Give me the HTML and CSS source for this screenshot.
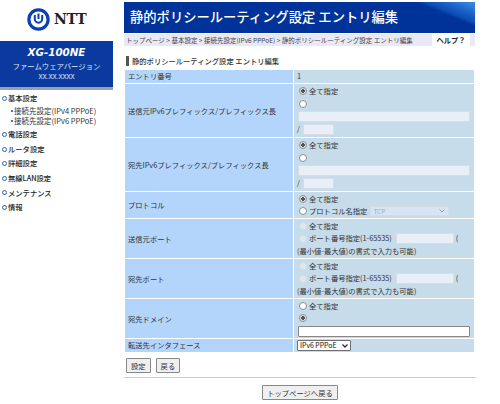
FILE: index.html
```html
<!DOCTYPE html>
<html lang="ja">
<head>
<meta charset="utf-8">
<title>静的ポリシールーティング設定 エントリ編集</title>
<link rel="stylesheet" href="styles.css">
</head>
<body>
<div class="page">
  <aside class="side">
    <div class="logo">
      <svg class="mark" width="23" height="23" viewBox="0 0 23 23"><circle cx="11.5" cy="11.5" r="9.6" fill="none" stroke="#0a3fb5" stroke-width="3.2"/><path d="M7.8 7 V11 A3.7 3.7 0 0 0 15.2 11 V7" fill="none" stroke="#0a3fb5" stroke-width="2"/><path d="M11.5 5.5 V11" stroke="#0a3fb5" stroke-width="2"/></svg>
      <span class="ntt">NTT</span>
    </div>
    <div class="model">
      <div class="model-name">XG-100NE</div>
      <div class="fw">ファームウェアバージョン</div>
      <div class="ver">XX.XX.XXXX</div>
    </div>
    <nav class="menu">
      <div class="mi"><i class="dot"></i>基本設定</div>
      <div class="sub">接続先設定(IPv4 PPPoE)</div>
      <div class="sub">接続先設定(IPv6 PPPoE)</div>
      <div class="mi"><i class="dot"></i>電話設定</div>
      <div class="mi"><i class="dot"></i>ルータ設定</div>
      <div class="mi"><i class="dot"></i>詳細設定</div>
      <div class="mi"><i class="dot"></i>無線LAN設定</div>
      <div class="mi"><i class="dot"></i>メンテナンス</div>
      <div class="mi"><i class="dot"></i>情報</div>
    </nav>
  </aside>
  <main class="main">
    <h1 class="title">静的ポリシールーティング設定 エントリ編集</h1>
    <div class="crumbs">
      <span class="crumb-text">トップページ &gt; 基本設定 &gt; 接続先設定(IPv6 PPPoE) &gt; 静的ポリシールーティング設定 エントリ編集</span>
      <span class="help">ヘルプ？</span>
    </div>
    <h2 class="section">静的ポリシールーティング設定 エントリ編集</h2>
    <table class="form">
      <tr class="r1"><th>エントリ番号</th><td><span class="val">1</span></td></tr>
      <tr class="r2"><th>送信元IPv6プレフィックス/プレフィックス長</th><td>
        <label class="line"><input type="radio" class="rd" name="a" checked>全て指定</label>
        <label class="line"><input type="radio" class="rd" name="a"></label>
        <input class="tx full off" disabled>
        <div class="line2">/<input class="tx short off" disabled></div>
      </td></tr>
      <tr class="r2"><th>宛先IPv6プレフィックス/プレフィックス長</th><td>
        <label class="line"><input type="radio" class="rd" name="b" checked>全て指定</label>
        <label class="line"><input type="radio" class="rd" name="b"></label>
        <input class="tx full off" disabled>
        <div class="line2">/<input class="tx short off" disabled></div>
      </td></tr>
      <tr class="r4"><th>プロトコル</th><td>
        <label class="line"><input type="radio" class="rd" name="c" checked>全て指定</label>
        <label class="line"><input type="radio" class="rd" name="c">プロトコル名指定<select class="sel off" disabled><option>TCP</option></select></label>
      </td></tr>
      <tr class="r5"><th>送信元ポート</th><td>
        <label class="line"><input type="radio" class="rd" name="d" disabled>全て指定</label>
        <label class="line"><input type="radio" class="rd" name="d" disabled>ポート番号指定(1-65535)<input class="tx port off" disabled>(</label>
        <div class="line note">(最小値-最大値)の書式で入力も可能)</div>
      </td></tr>
      <tr class="r5"><th>宛先ポート</th><td>
        <label class="line"><input type="radio" class="rd" name="e" disabled>全て指定</label>
        <label class="line"><input type="radio" class="rd" name="e" disabled>ポート番号指定(1-65535)<input class="tx port off" disabled>(</label>
        <div class="line note">(最小値-最大値)の書式で入力も可能)</div>
      </td></tr>
      <tr class="r5"><th>宛先ドメイン</th><td>
        <label class="line"><input type="radio" class="rd" name="f">全て指定</label>
        <label class="line"><input type="radio" class="rd" name="f" checked></label>
        <input class="tx full on">
      </td></tr>
      <tr class="r1"><th>転送先インタフェース</th><td><select class="sel2"><option>IPv6 PPPoE</option></select></td></tr>
    </table>
    <div class="actions"><button class="btn">設定</button><button class="btn">戻る</button></div>
    <hr class="rule">
    <div class="top"><button class="btn">トップページへ戻る</button></div>
  </main>
</div>
</body>
</html>
```
FILE: styles.css
```css
html,body{margin:0;padding:0;background:#fff}
body{font-family:"Noto Sans CJK JP","Noto Sans",sans-serif;font-size:7.3px;color:#333;width:500px;height:404px;overflow:hidden}
.page{display:flex;align-items:flex-start}
.side{width:113px;flex:none;margin-right:11px}
.logo{height:41px;display:flex;align-items:center;gap:4px;padding:0 0 3px 27px;box-sizing:border-box;background:#fff}
.ntt{font-family:"DejaVu Serif",serif;font-weight:700;font-size:14px;color:#222;letter-spacing:-.2px}
.model{height:46px;background:#0b3a9f;border-bottom:3px solid #9a9fae;text-align:center;color:#dfe6f6}
.model-name{font-family:"DejaVu Sans",sans-serif;font-style:italic;font-weight:700;font-size:10.3px;color:#fff;padding-top:5px;line-height:13px}
.fw{font-size:7.4px;line-height:11px;margin-top:1px}
.ver{font-size:7.2px;line-height:10px;margin-top:1px;letter-spacing:-.1px;transform:scaleY(.8)}
.menu{padding:1px 0 0 2px}
.mi{font-size:7.3px;line-height:14.6px;color:#222;font-weight:500;display:flex;align-items:center}
.dot{width:3px;height:3px;border:1.5px solid #1a66c8;border-radius:50%;margin-right:1px;flex:none}
.sub{font-size:7.5px;line-height:10.8px;padding-left:12px;color:#333;position:relative}
.sub::before{content:"";position:absolute;left:9px;top:4px;width:2px;height:2px;background:#3a78c8}
.main{width:352px;flex:none}
.title{margin:2px 0 0;height:31px;box-sizing:border-box;width:351px;padding-left:6px;font-size:13.3px;line-height:30px;font-weight:500;color:#fff;background:linear-gradient(22deg,#003399 0,#003399 86%,#0c4db2 88%,#1a5fc4 92%,#2a78d8 96%,#3a8ce2 100%)}
.crumbs{margin-top:1px;width:351px;height:12px;background:#e9e9f5;display:flex;justify-content:space-between;align-items:center;box-sizing:border-box;padding-left:2px}
.crumb-text{font-size:6.5px;white-space:nowrap;color:#444;line-height:12px}
.help{background:#fff;width:38px;height:12px;line-height:13px;font-size:7.3px;font-weight:700;color:#222;text-align:center;margin-right:5px}
.section{margin:10px 0 0 2px;height:10px;font-size:7.3px;line-height:10px;font-weight:500;color:#333;border-left:3px solid #555;padding-left:3px}
.form{margin:3px 0 0 0;border-collapse:collapse;table-layout:fixed;width:351px}
.form th,.form td{padding:0;border:1px solid #fff}
.form th{width:169px;background:#b3d5fb;text-align:left;font-weight:400;padding-left:3px;box-sizing:border-box;color:#333}
.form td{background:#c6dcea;padding-left:2px;color:#333;vertical-align:middle}
.r1 th,.r1 td{height:13px;line-height:13px}
.r2 th,.r2 td{height:53px}
.r4 th,.r4 td{height:26px}
.r5 th,.r5 td{height:39px}
.val{padding-left:1px}
.line{display:flex;align-items:center;height:12.5px;line-height:12.5px;white-space:nowrap}
.note{padding-left:1px}
.line2{height:13px;line-height:13px;display:flex;align-items:center;gap:3px;padding-left:1px}
.rd{appearance:none;width:6px;height:6px;box-sizing:content-box;margin:0 2px 0 3px;flex:none;border:.5px solid #8a8f96;border-radius:50%;background:#fff}
.rd:checked{background:radial-gradient(circle,#555 0 38%,#dfe3e6 46%)}
.rd:disabled{background:#dde7ef;border-color:#d3dee7}
.tx{box-sizing:border-box;border:1px solid #bbb;border-radius:1px;padding:0;height:11px;display:block}
.full{width:172px;margin:1px 0 1px 2px}
.short{width:31px}
.port{width:58px;margin:0 2px 0 4px}
.off{background:#e8eff6;border-color:#d5dee6}
.on{background:#fff;border-color:#888}
.sel{appearance:none;width:79px;height:10px;font:6.5px/8px "Noto Sans CJK JP",sans-serif;margin-left:3px;padding:0 0 0 2px;border:1px solid #d5dee6;background:#e0e8f6 url("data:image/svg+xml,%3Csvg xmlns='http://www.w3.org/2000/svg' width='6' height='4'%3E%3Cpath d='M.5.5 3 3 5.5.5' fill='none' stroke='%23888' stroke-width='1'/%3E%3C/svg%3E") no-repeat right 3px center;color:#999}
.sel2{appearance:none;width:54px;height:11px;font:6.9px/9px "Noto Sans CJK JP",sans-serif;padding:0 0 0 2px;margin-left:1px;display:block;border:1px solid #666;border-radius:1px;color:#000;opacity:.92;background-color:#fff;background-image:url("data:image/svg+xml,%3Csvg xmlns='http://www.w3.org/2000/svg' width='6' height='4'%3E%3Cpath d='M.5.5 3 3 5.5.5' fill='none' stroke='%23222' stroke-width='1.3'/%3E%3C/svg%3E");background-repeat:no-repeat;background-position:right 2px center}
.actions{display:flex;gap:5px;margin:5px 0 0 2px}
.btn{font:7.3px/12px "Noto Sans CJK JP",sans-serif;height:15px;padding:0 4px;background:#efefef;border:1px solid #888;border-radius:1px;color:#333}
.rule{margin:4px 0 0;width:352px;border:0;border-top:1px solid #ccc}
.top{margin-top:7px;text-align:center}
```
